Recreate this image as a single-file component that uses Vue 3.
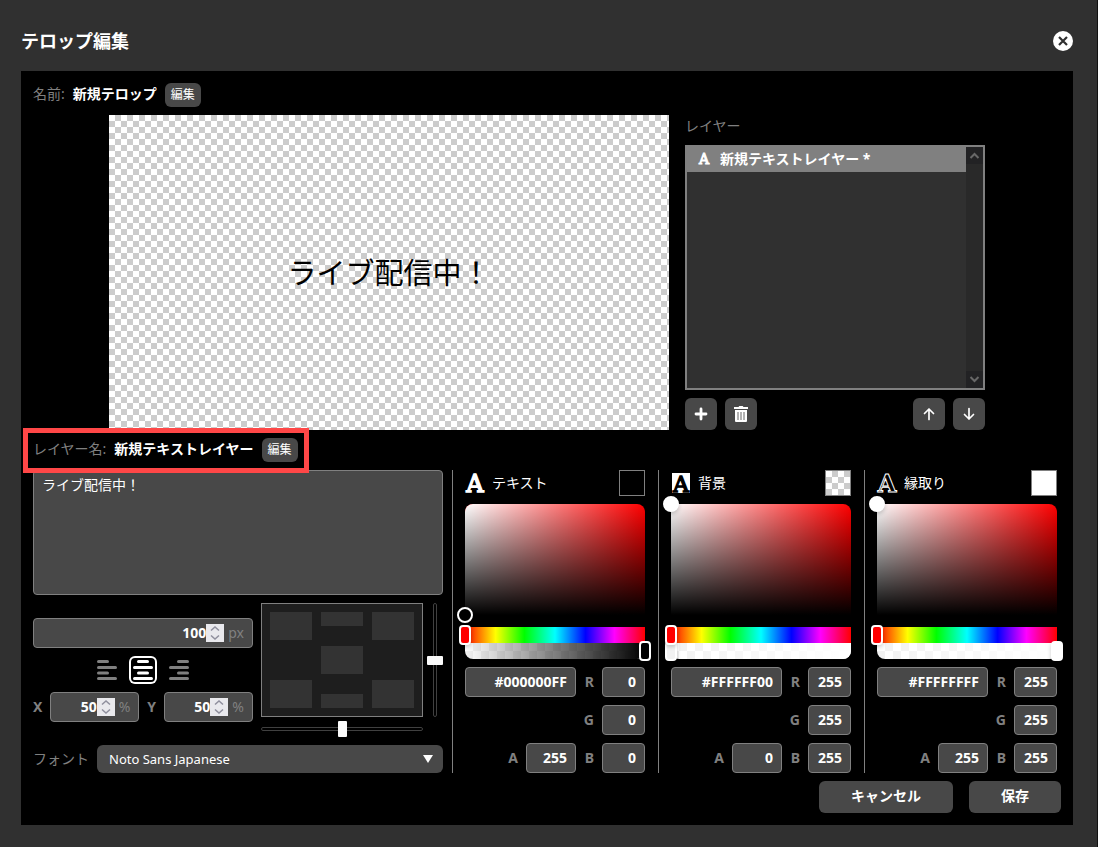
<script setup>
import { ref } from 'vue'

const content = ref('ライブ配信中！')
const size = ref('100')
const posX = ref('50')
const posY = ref('50')
const align = ref('center')
const sliderX = ref(50)
const sliderY = ref(50)

const aligns = [
  { id: 'left', label: '左揃え', x1: 5.5, x2: 14.5 },
  { id: 'center', label: '中央揃え', x1: 9.5, x2: 18.5 },
  { id: 'right', label: '右揃え', x1: 13.5, x2: 22.5 },
]

const cells = ['', 'top', '', 'none', '', 'none', '', 'bottom', '']

const pickers = ref([
  { id: 'text', label: 'テキスト', hex: '#000000FF', rgb: '0, 0, 0', r: 0, g: 0, b: 0, a: 255, sx: '0%', sy: '100%', fill: '#000' },
  { id: 'back', label: '背景', hex: '#FFFFFF00', rgb: '255, 255, 255', r: 255, g: 255, b: 255, a: 0, sx: '0%', sy: '0%', fill: '#f2f2f2' },
  { id: 'edge', label: '縁取り', hex: '#FFFFFFFF', rgb: '255, 255, 255', r: 255, g: 255, b: 255, a: 255, sx: '0%', sy: '0%', fill: '#fff' },
])
</script>

<template>
  <div class="page">
    <header class="header">
      <h1>テロップ編集</h1>
      <button class="close" aria-label="閉じる">
        <svg width="20" height="20" viewBox="0 0 20 20">
          <circle cx="10" cy="10" r="10" fill="#fff" />
          <path d="M6 6l8 8M14 6l-8 8" stroke="#303030" stroke-width="2.2" />
        </svg>
      </button>
    </header>

    <main class="panel">
      <div class="name-row">
        <span class="muted">名前:</span>
        <strong>新規テロップ</strong>
        <button class="edit">編集</button>
      </div>

      <section class="stage">
        <div class="preview checker">ライブ配信中！</div>
        <div class="layers">
          <div class="muted layers-label">レイヤー</div>
          <div class="list">
            <ul>
              <li>
                <svg width="14" height="14" viewBox="0 0 14 14"><text x="7" y="12" text-anchor="middle" class="glyph small">A</text></svg>
                新規テキストレイヤー *
              </li>
            </ul>
            <div class="scrollbar">
              <span><svg width="11" height="7" viewBox="0 0 11 7"><path d="M1.5 6l4-4 4 4" /></svg></span>
              <span><svg width="11" height="7" viewBox="0 0 11 7"><path d="M1.5 1l4 4 4-4" /></svg></span>
            </div>
          </div>
          <div class="tools">
            <button class="tool" aria-label="追加">
              <svg width="16" height="16" viewBox="0 0 16 16"><path d="M8 3v10M3 8h10" stroke="#fff" stroke-width="2.8" stroke-linecap="round" /></svg>
            </button>
            <button class="tool" aria-label="削除">
              <svg width="16" height="16" viewBox="0 0 16 16">
                <path d="M1 1h4.500l.8-1h3.400l.8 1H15v2H1zM2 4h12v11a1 1 0 0 1-1 1H3a1 1 0 0 1-1-1z" fill="#fff" />
                <path d="M5 6v8M8 6v8M11 6v8" stroke="#666" />
              </svg>
            </button>
            <button class="tool up" aria-label="上へ">
              <svg width="16" height="16" viewBox="0 0 16 16"><path d="M8 13.500V3M3.500 7.500L8 3l4.500 4.500" class="arrow" /></svg>
            </button>
            <button class="tool" aria-label="下へ">
              <svg width="16" height="16" viewBox="0 0 16 16"><path d="M8 2.500V13M3.500 8.500L8 13l4.500-4.500" class="arrow" /></svg>
            </button>
          </div>
        </div>
      </section>

      <div class="name-row highlighted">
        <span class="muted">レイヤー名:</span>
        <strong>新規テキストレイヤー</strong>
        <button class="edit">編集</button>
      </div>

      <section class="settings">
        <div class="left">
          <textarea v-model="content" aria-label="テキスト"></textarea>
          <div class="placement">
            <div class="numbers">
              <label class="field">
                <input v-model="size" aria-label="サイズ" />
                <span class="spin"><svg width="10" height="14" viewBox="0 0 10 14"><path d="M1 4.500l4-3.500 4 3.500M1 9.500L5 13l4-3.500" /></svg></span>
                <span class="unit">px</span>
              </label>
              <div class="aligns">
                <button v-for="a in aligns" :key="a.id" :class="{ active: align === a.id }" :aria-label="a.label" @click="align = a.id">
                  <svg width="28" height="28" viewBox="0 0 28 28">
                    <path :d="`M${a.x1} 5.500H${a.x2}M5.500 11.500H22.500M${a.x1} 17H${a.x2}M5.500 22.500H22.500`" />
                  </svg>
                </button>
              </div>
              <div class="xy">
                <label for="pos-x">X</label>
                <div class="field">
                  <input id="pos-x" v-model="posX" />
                  <span class="spin"><svg width="10" height="14" viewBox="0 0 10 14"><path d="M1 4.500l4-3.500 4 3.500M1 9.500L5 13l4-3.500" /></svg></span>
                  <span class="unit">%</span>
                </div>
                <label for="pos-y">Y</label>
                <div class="field">
                  <input id="pos-y" v-model="posY" />
                  <span class="spin"><svg width="10" height="14" viewBox="0 0 10 14"><path d="M1 4.500l4-3.500 4 3.500M1 9.500L5 13l4-3.500" /></svg></span>
                  <span class="unit">%</span>
                </div>
              </div>
            </div>
            <div class="pad-area">
              <div class="pad">
                <span v-for="(c, i) in cells" :key="i" :class="c"></span>
              </div>
              <input v-model="sliderY" type="range" class="slider vertical" aria-label="縦位置" />
              <input v-model="sliderX" type="range" class="slider horizontal" aria-label="横位置" />
            </div>
          </div>
          <div class="font-row">
            <label for="font" class="muted">フォント</label>
            <div class="select">
              <select id="font"><option>Noto Sans Japanese</option></select>
              <svg width="10" height="8" viewBox="0 0 10 8"><path d="M0 0h10L5 8z" fill="#fff" /></svg>
            </div>
          </div>
        </div>

        <div v-for="p in pickers" :key="p.id" class="picker">
          <div class="picker-head">
            <svg width="20" height="20" viewBox="0 0 20 20">
              <rect v-if="p.id === 'back'" x="1" width="18" height="20" fill="#fff" />
              <text x="10" y="19" text-anchor="middle" :class="['glyph', p.id]">A</text>
            </svg>
            <span>{{ p.label }}</span>
            <i class="swatch checker"><b :style="{ background: `rgba(${p.rgb}, ${p.a / 255})` }"></b></i>
          </div>
          <div class="saturation">
            <i class="knob" :style="{ left: p.sx, top: p.sy, background: `rgb(${p.rgb})` }"></i>
          </div>
          <div class="bar hue">
            <input type="range" max="360" value="0" :aria-label="p.label + ' 色相'" />
          </div>
          <div class="bar alpha">
            <i :style="{ background: `linear-gradient(90deg, rgba(${p.rgb}, 0), rgb(${p.rgb}))` }"></i>
            <input v-model="p.a" type="range" max="255" :style="{ '--fill': p.fill }" :aria-label="p.label + ' 不透明度'" />
          </div>
          <div class="channels">
            <input v-model="p.hex" class="hex" :aria-label="p.label + ' HEX'" />
            <label :for="p.id + '-r'">R</label><input :id="p.id + '-r'" v-model="p.r" />
            <label :for="p.id + '-g'" class="green">G</label><input :id="p.id + '-g'" v-model="p.g" />
            <label :for="p.id + '-a'">A</label><input :id="p.id + '-a'" v-model="p.a" />
            <label :for="p.id + '-b'">B</label><input :id="p.id + '-b'" v-model="p.b" />
          </div>
        </div>
      </section>

      <footer class="actions">
        <button class="cancel">キャンセル</button>
        <button class="save">保存</button>
      </footer>
    </main>
  </div>
</template>

<style>
body {
  margin: 0;
  background: #303030;
}
</style>

<style scoped>
* {
  box-sizing: border-box;
}
.page {
  min-height: 100vh;
  padding: 21px 24px 22px 21px;
  border-right: 1px solid #111;
  background: #303030;
  color: #fff;
  font: 14px/20px "Noto Sans", "Noto Sans CJK JP", sans-serif;
}
button,
input,
select,
textarea {
  margin: 0;
  font: inherit;
  color: inherit;
}
button {
  display: flex;
  align-items: center;
  justify-content: center;
  padding: 0;
  border: 0;
  background: #484848;
}
svg {
  display: block;
  flex: none;
  overflow: visible;
}
.header {
  display: flex;
  align-items: center;
  justify-content: space-between;
  height: 40px;
  margin-bottom: 10px;
}
h1 {
  margin: 0;
  font-size: 18px;
  line-height: 24px;
}
.close {
  border-radius: 50%;
  background: none;
}
.panel {
  display: flex;
  flex-direction: column;
  gap: 8px;
  padding: 12px;
  background: #000;
}
.muted {
  color: #808080;
}
.name-row {
  position: relative;
  display: flex;
  align-items: center;
  gap: 8px;
  width: fit-content;
  height: 24px;
}
.name-row .muted,
.name-row strong {
  padding-bottom: 2px;
}
.highlighted::after {
  content: "";
  position: absolute;
  inset: -10px -11px -11px -10px;
  border: 5px solid #ff4747;
  pointer-events: none;
}
.edit {
  width: 36px;
  height: 24px;
  border-radius: 6px;
  font-size: 12px;
}
.checker {
  background: repeating-conic-gradient(#ccc 0 25%, #fff 0 50%) 0 0 / 12px 12px;
}
.stage {
  display: flex;
  justify-content: center;
  gap: 16px;
}
.preview {
  display: flex;
  flex: 0 1 560px;
  align-items: center;
  justify-content: center;
  aspect-ratio: 16 / 9;
  color: #000;
  font-size: 29px;
}
.layers {
  display: flex;
  flex: 0 0 300px;
  flex-direction: column;
  gap: 8px;
}
.layers-label {
  line-height: 22px;
}
.list {
  display: flex;
  flex: 1;
  border: 2px solid #808080;
  background: #303030;
}
ul {
  flex: 1;
  margin: 0;
  padding: 0;
  list-style: none;
}
li {
  display: flex;
  align-items: center;
  gap: 9px;
  height: 25px;
  padding: 0 0 2px 10px;
  background: #808080;
  font-weight: bold;
}
.glyph {
  fill: #fff;
  stroke: #fff;
  stroke-width: 1.4;
  font: 24px "DejaVu Serif", "Liberation Serif", serif;
}
.glyph.small {
  stroke-width: 1;
  font-size: 14px;
}
.glyph.back {
  fill: #000;
  stroke: #000;
  font-size: 22px;
}
.glyph.edge {
  fill: #000;
  stroke-width: 1;
  font-weight: bold;
}
.scrollbar {
  display: flex;
  flex-direction: column;
  justify-content: space-between;
  width: 17px;
  background: #292929;
}
.scrollbar span {
  display: grid;
  place-items: center;
  height: 17px;
  background: #222224;
}
.scrollbar path {
  fill: none;
  stroke: #686868;
  stroke-width: 2;
}
.tools {
  display: flex;
  gap: 8px;
}
.tool {
  width: 32px;
  height: 32px;
  border-radius: 6px;
}
.up {
  margin-left: auto;
}
.arrow {
  fill: none;
  stroke: #fff;
  stroke-width: 1.7;
  stroke-linecap: round;
  stroke-linejoin: round;
}
.settings {
  display: flex;
  gap: 13px;
  padding-right: 4px;
}
.left {
  display: flex;
  flex: 1;
  flex-direction: column;
  gap: 8px;
  min-width: 0;
  margin-right: -4px;
}
textarea {
  display: block;
  width: 100%;
  height: 125px;
  padding: 4px 8px;
  border: 1px solid #808080;
  border-radius: 4px;
  background: #484848;
  resize: none;
}
.placement {
  display: flex;
  gap: 8px;
}
.numbers {
  display: flex;
  flex: 1;
  flex-direction: column;
  justify-content: center;
  gap: 8px;
  min-width: 0;
}
.field {
  display: flex;
  flex: 1;
  align-items: center;
  min-width: 0;
  min-height: 30px;
  padding-right: 8px;
  border: 1px solid #808080;
  border-radius: 4px;
  background: #484848;
}
.numbers > .field {
  flex: none;
}
.field input {
  flex: 1;
  width: 0;
  min-width: 0;
  padding: 0;
  border: 0;
  background: none;
  font-weight: bold;
  text-align: right;
}
.spin {
  display: grid;
  flex: none;
  place-items: center;
  width: 18px;
  height: 18px;
  margin-right: 4px;
  background: #e9e9ed;
}
.spin path {
  fill: none;
  stroke: #8f8f9d;
  stroke-width: 1.5;
}
.unit {
  color: #808080;
}
.aligns {
  display: flex;
  justify-content: center;
  gap: 8px;
}
.aligns button {
  width: 28px;
  height: 28px;
  border-radius: 6px;
  background: none;
}
.aligns path {
  stroke: #808080;
  stroke-width: 3;
  stroke-linecap: round;
}
.aligns .active {
  box-shadow: inset 0 0 0 2px #fff;
}
.aligns .active path {
  stroke: #fff;
}
.xy {
  display: flex;
  align-items: center;
  gap: 8px;
}
.xy label,
.channels label {
  color: #808080;
  font-weight: bold;
}
.pad-area {
  display: grid;
  grid-template-columns: 162px 16px;
  grid-template-rows: 114px 16px;
  gap: 4px;
}
.pad {
  display: grid;
  grid-template-columns: repeat(3, 1fr);
  grid-template-rows: repeat(3, 1fr);
  gap: 6px 9px;
  padding: 8px;
  border: 1px solid #808080;
  background: #1e1e1e;
}
.pad span {
  background: #333;
}
.pad .top {
  height: 14px;
}
.pad .bottom {
  align-self: end;
  height: 14px;
}
.pad .none {
  background: none;
}
input[type="range"] {
  appearance: none;
  background: none;
}
.slider {
  width: 100%;
  height: 16px;
}
.slider::-webkit-slider-runnable-track {
  height: 4px;
  border: 1px solid #404040;
  border-radius: 2px;
}
.slider::-webkit-slider-thumb {
  appearance: none;
  width: 9px;
  height: 16px;
  margin-top: -7px;
  border-radius: 1px;
  background: #fafafa;
}
.vertical {
  width: 16px;
  height: 100%;
  writing-mode: vertical-lr;
}
.vertical::-webkit-slider-runnable-track {
  width: 4px;
  height: 100%;
}
.vertical::-webkit-slider-thumb {
  width: 16px;
  height: 9px;
  margin-top: 0;
  margin-left: -7px;
}
.font-row {
  display: flex;
  align-items: center;
  gap: 8px;
}
.select {
  position: relative;
  flex: 1;
}
.select select {
  display: block;
  width: 100%;
  height: 28px;
  padding: 0 12px;
  border: 0;
  border-radius: 6px;
  background: #484848;
  font-size: 13px;
  appearance: none;
}
.select svg {
  position: absolute;
  top: 10px;
  right: 10px;
  pointer-events: none;
}
.picker {
  flex: 0 0 193px;
  padding-left: 12px;
  border-left: 1px solid #808080;
}
.picker-head {
  display: flex;
  align-items: center;
  gap: 7px;
  height: 26px;
  margin-bottom: 8px;
}
.swatch {
  width: 26px;
  height: 26px;
  margin-left: auto;
  border: 1px solid #808080;
}
.swatch b {
  display: block;
  height: 100%;
}
.saturation {
  position: relative;
  height: 123px;
  border-bottom: 12px solid #000;
  border-radius: 8px 8px 0 0;
  background: linear-gradient(0deg, #000, transparent), linear-gradient(90deg, #fff, rgba(255, 255, 255, 0)), #f00;
}
.knob {
  position: absolute;
  z-index: 1;
  width: 16px;
  height: 16px;
  border: 2px solid #fff;
  border-radius: 50%;
  box-shadow: 0 2px 4px rgba(0, 0, 0, 0.2);
  transform: translate(-50%, -50%);
}
.bar {
  position: relative;
  height: 16px;
}
.bar input {
  position: relative;
  display: block;
  width: calc(100% + 12px);
  height: 16px;
  margin: 0 -6px;
}
.bar input::-webkit-slider-thumb {
  appearance: none;
  width: 12px;
  height: 20px;
  border: 2px solid #fff;
  border-radius: 4px;
  background: var(--fill, #f00);
  box-shadow: 0 2px 4px rgba(0, 0, 0, 0.2);
}
.hue {
  background: linear-gradient(90deg, #f00 0%, #ff0 17%, #0f0 33%, #0ff 50%, #00f 67%, #f0f 83%, #f00 100%);
}
.hue input {
  z-index: 1;
}
.alpha {
  margin-bottom: 8px;
  border-radius: 0 0 8px 8px;
  background: repeating-conic-gradient(#f2f2f2 0 25%, #fff 0 50%) 0 0 / 16px 16px;
}
.alpha i {
  position: absolute;
  inset: 0;
  border-radius: inherit;
}
.channels {
  display: grid;
  grid-template-columns: 53px 58px 18px 51px;
  gap: 8px 0;
  align-items: center;
}
.channels input {
  width: 100%;
  height: 30px;
  padding: 0 8px 2px;
  border: 1px solid #808080;
  border-radius: 4px;
  background: #484848;
  font-weight: bold;
  text-align: right;
}
.channels .hex {
  grid-column: 1 / 3;
}
.channels .green {
  grid-column: 3;
}
.channels label {
  text-align: right;
}
.channels label + input {
  justify-self: end;
  width: calc(100% - 8px);
}
.actions {
  display: flex;
  justify-content: flex-end;
  gap: 16px;
}
.actions button {
  height: 32px;
  padding-bottom: 2px;
  border-radius: 6px;
  font-weight: bold;
}
.cancel {
  width: 134px;
}
.save {
  width: 92px;
}
</style>
